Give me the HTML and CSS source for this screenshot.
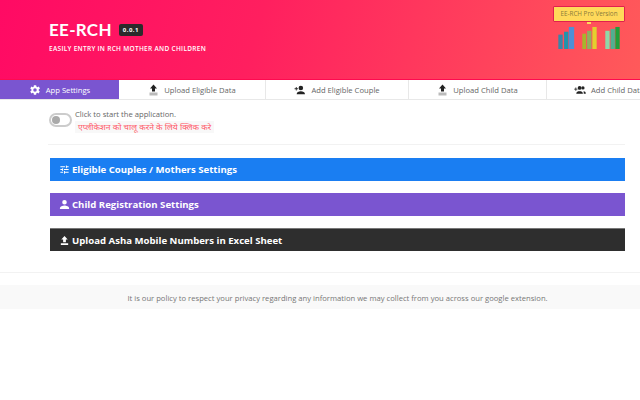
FILE: index.html
```html
<!DOCTYPE html>
<html lang="en">

<head>
  <meta charset="UTF-8">
  <title>EE-RCH</title>
  <link rel="stylesheet" href="styles.css">
</head>

<body>
  <header class="hero">
    <div class="brand">
      <div class="brand-line">
        <h1>EE-RCH</h1>
        <span class="version">0.0.1</span>
      </div>
      <p class="tagline">EASILY ENTRY IN RCH MOTHER AND CHILDREN</p>
    </div>
    <div class="promo">
      <div class="promo-tip">EE-RCH Pro Version</div>
      <svg class="bars" width="64" height="23" viewBox="0 0 64 24">
        <rect x="0" y="9" width="4.500" height="15" fill="#3a86a8" />
        <rect x="6" y="6" width="4.500" height="18" fill="#1f94ad" />
        <rect x="11" y="1" width="5.500" height="23" fill="#4f8fd6" />
        <rect x="25" y="8" width="4" height="16" fill="#a8b52c" />
        <rect x="30" y="5" width="4.500" height="19" fill="#8fb060" />
        <rect x="35.500" y="1" width="4.500" height="23" fill="#e3d02e" />
        <rect x="49" y="5" width="4.500" height="19" fill="#8fd8a8" />
        <rect x="54.500" y="3" width="4.500" height="21" fill="#4fb090" />
        <rect x="59.500" y="1" width="4.500" height="23" fill="#1fa03a" />
      </svg>
    </div>
  </header>

  <nav class="tabs">
    <a class="tab tab-active tab-settings">
      <svg width="12" height="12" viewBox="0 0 24 24"><path fill="currentColor" d="M19.400 13a7.500 7.500 0 0 0 0-2l2.500-1.800-2.300-4-2.800 1.200a7.500 7.500 0 0 0-1.700-1L14.300 2.300H9.700l-.4 3.100a7.500 7.500 0 0 0-1.700 1L4.800 5.200l-2.300 4L5 11a7.500 7.500 0 0 0 0 2l-2.500 1.800 2.300 4 2.800-1.200a7.500 7.500 0 0 0 1.700 1l.4 3.100h4.600l.4-3.100a7.500 7.500 0 0 0 1.700-1l2.800 1.200 2.300-4zM12 15.500a3.500 3.500 0 1 1 0-7 3.500 3.500 0 0 1 0 7z" /></svg>
      App Settings
    </a>
    <a class="tab tab-eligible">
      <svg width="11" height="12" viewBox="0 0 22 24"><path fill="#222" d="M11 1l7 8h-4v6H8V9H4z" /><rect x="3" y="17" width="16" height="6" fill="#bbb" /></svg>
      Upload Eligible Data
    </a>
    <a class="tab tab-couple">
      <svg width="12" height="10" viewBox="0 0 28 24"><circle cx="16" cy="7" r="5.500" fill="#222" /><path fill="#222" d="M6 22c0-5 5-7 10-7s10 2 10 7zM1 8h3V5h2v3h3v2H6v3H4v-3H1z" /></svg>
      Add Eligible Couple
    </a>
    <a class="tab tab-child">
      <svg width="11" height="12" viewBox="0 0 22 24"><path fill="#222" d="M11 1l7 8h-4v6H8V9H4z" /><rect x="3" y="17" width="16" height="6" fill="#bbb" /></svg>
      Upload Child Data
    </a>
    <a class="tab tab-add-child">
      <svg width="12" height="10" viewBox="0 0 28 24"><circle cx="13" cy="7" r="4.500" fill="#222" /><circle cx="21" cy="7" r="4" fill="#222" /><path fill="#222" d="M5 21c0-5 4-6 8-6s8 1 8 6zM22.500 15c3 .3 5.500 1.500 5.500 6h-5c0-2.500-.2-4.500-.5-6zM0 9h3V6h2v3h3v2H5v3H3v-3H0z" /></svg>
      Add Child Data
    </a>
  </nav>

  <main class="content">
    <div class="switch-row">
      <span class="switch"><span class="knob"></span></span>
      <div class="switch-text">
        <div>Click to start the application.</div>
        <div class="hindi">एप्लीकेशन को चालू करने के लिये क्लिक करे</div>
      </div>
    </div>
    <hr class="rule">
    <div class="panel panel-blue">
      <svg width="11" height="11" viewBox="0 0 24 24"><path fill="currentColor" d="M3 17v2h6v-2zM3 5v2h10V5zm10 16v-2h8v-2h-8v-2h-2v6zM7 9v2H3v2h4v2h2V9zm14 4v-2H11v2zM15 9h2V7h4V5h-4V3h-2z" /></svg>
      Eligible Couples / Mothers Settings
    </div>
    <div class="panel panel-purple">
      <svg width="11" height="11" viewBox="0 0 24 24"><path fill="currentColor" d="M12 12a5 5 0 1 0 0-10 5 5 0 0 0 0 10zm0 2c-4 0-10 2-10 6v2h20v-2c0-4-6-6-10-6z" /></svg>
      Child Registration Settings
    </div>
    <div class="panel panel-dark">
      <svg width="11" height="11" viewBox="0 0 24 24"><path fill="currentColor" d="M9 16h6v-6h4l-7-8-7 8h4zM4 18h16v4H4z" /></svg>
      Upload Asha Mobile Numbers in Excel Sheet
    </div>
  </main>

  <hr class="rule rule-wide">
  <footer class="policy">It is our policy to respect your privacy regarding any information we may collect from you across our google extension.</footer>
</body>

</html>
```

FILE: styles.css
```css
html,
body {
  height: 100%;
  overflow: hidden;
}

body {
  margin: 0;
  background: #fff;
  color: #666;
  font-family: 'Open Sans', 'Noto Sans', sans-serif;
  font-size: 7.650px;
}

.hero {
  height: 80px;
  box-sizing: border-box;
  padding: 0 0 0 49px;
  display: flex;
  justify-content: space-between;
  background: linear-gradient(105deg, #ff0a64 0%, #ff1f5f 40%, #ff5a5a 100%);
  border-bottom: 1px solid #ff0a50;
  color: #fff;
}

.brand {
  padding-top: 19px;
}

.brand-line {
  display: flex;
  align-items: center;
  gap: 7px;
}

h1 {
  margin: 0;
  font-family: 'Lato', sans-serif;
  font-size: 17px;
  line-height: 22px;
  font-weight: 700;
  letter-spacing: 0.300px;
}

.version {
  background: #2b2b2b;
  border-radius: 2px;
  padding: 2px 4px;
  font-size: 6px;
  line-height: 8px;
  font-weight: 700;
  letter-spacing: 0.500px;
}

.tagline {
  margin: 3px 0 0;
  font-size: 6.500px;
  line-height: 9px;
  font-weight: 600;
  letter-spacing: 0.300px;
}

.promo {
  width: 87px;
  padding-top: 6px;
  display: flex;
  flex-direction: column;
  align-items: flex-start;
}

.promo-tip {
  position: relative;
  width: 72px;
  height: 16px;
  box-sizing: border-box;
  background: #ffd95a;
  border: 1px solid #e0204f;
  border-radius: 1px;
  color: #8a7a3a;
  font-size: 6.300px;
  line-height: 14px;
  text-align: center;
  white-space: nowrap;
}

.promo-tip::after {
  content: '';
  position: absolute;
  left: 33px;
  bottom: -3px;
  width: 4px;
  height: 2px;
  background: #ffd95a;
}

.bars {
  margin: 4px 0 0 4px;
}

.tabs {
  height: 20px;
  display: flex;
  border-bottom: 1px solid #e8e8e8;
  box-sizing: border-box;
  overflow: hidden;
}

.tab {
  flex: none;
  display: flex;
  align-items: center;
  justify-content: center;
  gap: 5px;
  border-right: 1px solid #e8e8e8;
  box-sizing: border-box;
  white-space: nowrap;
  color: #666;
}

.tab-settings {
  width: 119px;
}

.tab-eligible {
  width: 147px;
}

.tab-couple {
  width: 143px;
}

.tab-child {
  width: 138px;
}

.tab-add-child {
  width: 125px;
}

.tab-active {
  background: #7a55d0;
  color: #fff;
  border-right: 0;
}

.content {
  padding: 9px 15px 0 50px;
}

.switch-row {
  display: flex;
  gap: 3px;
  min-height: 26px;
  margin-left: -1px;
}

.switch {
  width: 23px;
  height: 14px;
  margin-top: 4px;
  box-sizing: border-box;
  border: 2px solid #ccc;
  border-radius: 7px;
  background: #fff;
  padding: 1px;
}

.knob {
  display: block;
  width: 8px;
  height: 8px;
  border-radius: 50%;
  background: #aaa;
}

.switch-text {
  line-height: 11px;
}

.hindi {
  display: inline-block;
  margin-top: 1px;
  padding: 0 3px;
  background: #f8f8f8;
  color: #ff5a6a;
  font-family: 'Noto Sans', 'DejaVu Sans', sans-serif;
  font-size: 8.500px;
  line-height: 12px;
}

.rule {
  margin: 0;
  border: 0;
  border-top: 1px solid #f2f2f2;
}

.content .rule {
  margin: 9px 0 13px -2px;
}

.rule-wide {
  margin-top: 21px;
}

.panel {
  height: 23px;
  margin-bottom: 12px;
  padding-left: 9px;
  box-sizing: border-box;
  display: flex;
  align-items: center;
  gap: 2px;
  color: #fff;
  font-size: 9.600px;
  font-weight: 700;
}

.panel-blue {
  background: #1a7ef2;
}

.panel-purple {
  background: #7a55d0;
}

.panel-dark {
  background: #2e2e2e;
  border-top: 1px solid #777;
}

.policy {
  margin-top: 12px;
  height: 24px;
  padding-left: 35px;
  background: #f9f9f9;
  text-align: center;
  line-height: 27px;
  color: #777;
}
```
